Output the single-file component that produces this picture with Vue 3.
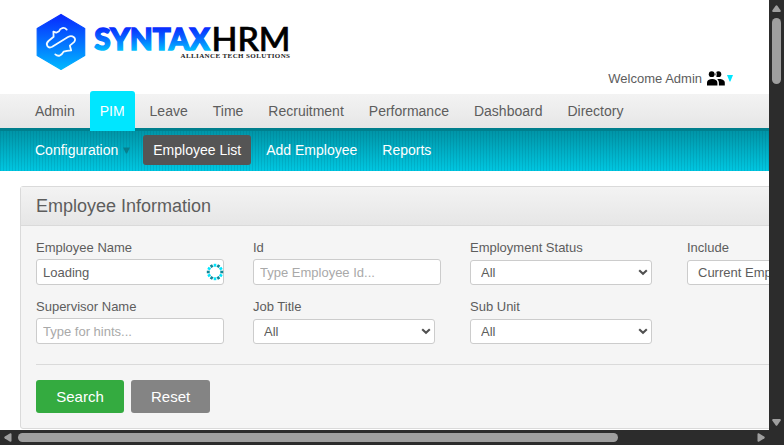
<script setup>
const menu = ['Admin', 'PIM', 'Leave', 'Time', 'Recruitment', 'Performance', 'Dashboard', 'Directory']
const submenu = ['Configuration', 'Employee List', 'Add Employee', 'Reports']
const fields = [
  { label: 'Employee Name', value: 'Loading', loading: true },
  { label: 'Id', placeholder: 'Type Employee Id...' },
  { label: 'Employment Status', options: ['All'] },
  { label: 'Include', options: ['Current Employees Only'] },
  { label: 'Supervisor Name', placeholder: 'Type for hints...' },
  { label: 'Job Title', options: ['All'] },
  { label: 'Sub Unit', options: ['All'] },
]
</script>

<template>
  <div class="window">
    <div class="page">
      <header class="header">
        <svg class="logo" width="280" height="80" viewBox="20 0 280 80">
          <defs>
            <linearGradient id="hex" x1="0" y1="0" x2="0" y2="1">
              <stop offset="0" stop-color="#0828ff" />
              <stop offset="1" stop-color="#00b8ff" />
            </linearGradient>
            <linearGradient id="word" gradientUnits="userSpaceOnUse" x1="0" y1="27" x2="0" y2="52">
              <stop offset="0" stop-color="#0828ff" />
              <stop offset=".35" stop-color="#0758ff" />
              <stop offset="1" stop-color="#00c8ff" />
            </linearGradient>
          </defs>
          <path d="M61 14.4 84.7 28.4V55.6L61 69.4 37.2 55.6V28.4Z" fill="url(#hex)" stroke="url(#hex)" stroke-width="1.2" stroke-linejoin="round" />
          <path d="M66.7 29.6C64 26.8 60.3 27.8 59 31.2L56.2 32.7 53.4 31.6 53.6 36.8 48.5 41C44.8 44.4 48 49 52.2 46.8L68 37C72.4 34.5 77.3 38.5 74 42.1L69.8 45.6 71.2 50.4 67 50.8 63.6 51.7C61.5 56 58 56.8 55.3 54.4" fill="none" stroke="#f2faff" stroke-width="1.8" stroke-linecap="round" stroke-linejoin="round" />
          <text class="brand" x="94.3" y="50.2" textLength="115.5" lengthAdjust="spacingAndGlyphs" fill="url(#word)" stroke="url(#word)">SYNTAX</text>
          <text class="brand-thin" x="211.5" y="51" textLength="79" lengthAdjust="spacingAndGlyphs">HRM</text>
          <text class="tagline" x="180.5" y="58" textLength="109.5" lengthAdjust="spacing">ALLIANCE TECH SOLUTIONS</text>
        </svg>
        <div class="welcome">
          <span>Welcome Admin</span>
          <svg class="people" width="18" height="15" viewBox="0 0 18 15">
            <circle cx="4.7" cy="3.2" r="2.9" /><circle cx="11.4" cy="3.2" r="2.9" />
            <path d="M0 14.5V11.7C0 9.2 2.2 8 5.2 8s5.2 1.2 5.2 3.7v2.8ZM11.9 14.5v-2.7c0-1.6-.7-2.7-1.7-3.6 4-.6 7.6.7 7.6 3.5v2.8Z" />
            <path d="M8 0c1.8 1.7 1.8 4.7 0 6.4" fill="none" stroke="#fff" stroke-width=".9" />
          </svg>
          <svg class="caret" width="6" height="7" viewBox="0 0 6 7"><path d="M0 0h6L3.4 6.5h-.8Z" fill="#00e6ff" /></svg>
        </div>
      </header>

      <nav class="menu">
        <a v-for="item in menu" :key="item" :class="{ active: item === 'PIM' }">{{ item }}</a>
      </nav>
      <nav class="submenu">
        <a v-for="item in submenu" :key="item" :class="{ active: item === 'Employee List' }">
          {{ item }}<svg v-if="item === 'Configuration'" class="arrow" width="7" height="7" viewBox="0 0 7 7"><path d="M0 .5h7L4 6.5H3Z" fill="#087f8d" /></svg>
        </a>
      </nav>

      <section class="panel">
        <h1>Employee Information</h1>
        <div class="body">
          <form class="fields">
            <div v-for="f in fields" :key="f.label" class="field">
              <label>{{ f.label }}</label>
              <div v-if="f.options" class="control select">
                <select><option v-for="o in f.options" :key="o">{{ o }}</option></select>
                <svg class="chevron" width="10" height="7" viewBox="0 0 10 7"><path d="M1.2 1.2 5 4.8 8.8 1.2" fill="none" stroke="#505050" stroke-width="2.1" /></svg>
              </div>
              <div v-else class="control">
                <input type="text" :value="f.value" :placeholder="f.placeholder">
                <svg v-if="f.loading" class="spinner" width="18" height="18" viewBox="-9 -9 18 18">
                  <g v-for="n in 12" :key="n" :transform="`rotate(${n * 30})`">
                    <rect x="-1.3" y="-8.2" width="2.6" height="2.9" :fill="n % 2 ? '#118696' : '#00e6ff'" />
                  </g>
                </svg>
              </div>
            </div>
          </form>
          <div class="actions">
            <button class="search">Search</button>
            <button class="reset">Reset</button>
          </div>
        </div>
      </section>
    </div>

    <div class="vbar">
      <svg width="9" height="7" viewBox="0 0 9 7"><path d="M3.6.8Q4.5-.3 5.4.8L8.7 5.5Q9 7 8 7H1Q0 7 .3 5.5Z" /></svg>
      <i class="thumb"></i>
      <svg class="end" width="9" height="7" viewBox="0 0 9 7"><path d="M3.6 6.2Q4.5 7.3 5.4 6.2L8.7 1.5Q9 0 8 0H1Q0 0 .3 1.5Z" /></svg>
    </div>
    <div class="hbar">
      <svg width="8" height="9" viewBox="0 0 8 9"><path d="M.8 3.6Q-.3 4.5.8 5.4L6.2 8.8Q7.5 9 7.5 8V1Q7.5 0 6.2.2Z" /></svg>
      <i class="thumb"></i>
      <svg class="end" width="8" height="9" viewBox="0 0 8 9"><path d="M7.2 3.6Q8.3 4.5 7.2 5.4L1.8 8.8Q.5 9 .5 8V1Q.5 0 1.8.2Z" /></svg>
    </div>
  </div>
</template>

<style>
body { margin: 0; overflow: hidden; }
</style>

<style scoped>
* { box-sizing: border-box; }
.window {
  display: grid;
  grid-template: 430px 15px / 769px 15px;
  width: 784px;
  height: 445px;
  overflow: hidden;
  background: #2c2c2c;
  font-family: "Liberation Sans", Arial, sans-serif;
  color: #5d5d5d;
}
.page { background: #fff; overflow: hidden; min-width: 0; }
.header { height: 94px; display: flex; justify-content: space-between; padding: 0 36px 0 20px; }
.logo { display: block; }
.brand { font: 900 31px Lato, sans-serif; stroke-width: 1.5px; }
.brand-thin { font: 500 32px Lato, sans-serif; fill: #000; stroke: #000; stroke-width: .7px; }
.tagline { font: bold 7px "Liberation Serif", serif; fill: #222; }
.welcome { display: flex; align-items: flex-start; padding-top: 71px; font-size: 13px; line-height: 15px; }
.people { margin: 0 0 0 5px; }
.caret { margin: 4px 0 0 2px; }

.menu {
  height: 34px;
  display: flex;
  gap: 5px;
  padding-left: 25px;
  background: linear-gradient(#f3f3f3, #e6e6e6);
  font-size: 14px;
  line-height: 34px;
}
.menu a { padding: 0 10px; }
.menu .active {
  position: relative;
  height: 40px;
  margin-top: -3px;
  line-height: 40px;
  border-radius: 3px 3px 0 0;
  background: #00e6ff;
  color: #fff;
}
.submenu {
  height: 43px;
  display: flex;
  gap: 5px;
  padding: 4px 0 0 25px;
  border-top: 3px solid #007f8d;
  background:
    repeating-linear-gradient(90deg, rgba(0, 65, 90, .12) 0 1px, transparent 1px 3px),
    linear-gradient(#0095a7, #00c7e1);
  font-size: 14px;
  line-height: 30px;
  color: #fff;
}
.submenu a { height: 30px; padding: 0 10px; border-radius: 3px; white-space: nowrap; }
.submenu .active { background: #555; }
.arrow { margin: 0 -2px 0 5px; vertical-align: 1px; }

.panel {
  width: 930px;
  height: 243px;
  margin: 15px 0 0 20px;
  border: 1px solid #dadada;
  border-radius: 3px;
  background: #f5f5f5;
}
h1 {
  height: 39px;
  margin: 0;
  padding-left: 15px;
  border-bottom: 1px solid #dadada;
  background: linear-gradient(#f3f3f3, #e6e6e6);
  font-size: 18px;
  font-weight: normal;
  line-height: 39px;
}
.body { padding: 14px 15px 0; }
.fields { display: grid; grid-template-columns: repeat(4, 217px); grid-auto-rows: 59px; }
.field { display: flex; flex-direction: column; font-size: 13px; }
label { height: 19px; line-height: 15px; }
.control { position: relative; width: 188px; height: 26px; }
.select { width: 182px; height: 25px; margin-top: 1px; }
input, select {
  display: block;
  width: 100%;
  height: 100%;
  margin: 0;
  padding: 0 6px;
  border: 1px solid #ccc;
  border-radius: 3px;
  outline: 0;
  background: #fff;
  color: #5d5d5d;
  font: inherit;
}
select { appearance: none; padding: 0 10px; }
input::placeholder { color: #a9a9a9; opacity: 1; }
.chevron { position: absolute; right: 4px; top: 9px; }
.spinner { position: absolute; right: 0; top: 4px; }
.actions { display: flex; gap: 7px; margin-top: 6px; padding-top: 15px; border-top: 1px solid #dadada; }
button { height: 33px; padding: 0 20px; border: 0; border-radius: 3px; color: #fff; font: 15px "Liberation Sans", Arial, sans-serif; }
.search { width: 88px; background: #34ab40; }
.reset { width: 79px; background: #848484; }

.vbar, .hbar { display: flex; align-items: center; fill: #9f9f9f; }
.vbar { flex-direction: column; padding: 5px 0 4px; }
.hbar { padding: 0 7px 0 4px; grid-column: 1; width: 769px; }
.thumb { background: #9f9f9f; border-radius: 5px; }
.vbar .thumb { width: 9px; height: 66px; margin-top: 6px; }
.hbar .thumb { width: 600px; height: 9px; margin-left: 6px; }
.vbar .end { margin-top: auto; }
.hbar .end { margin-left: auto; margin-right: -3px; }
svg, .thumb { flex: none; }
</style>
